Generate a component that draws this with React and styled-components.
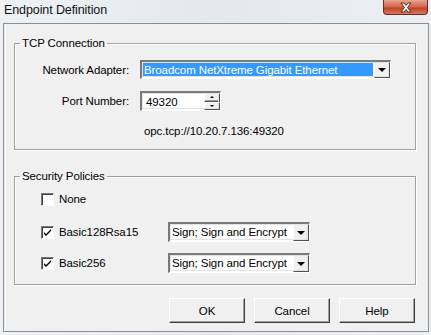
import React from 'react';
import styled, { createGlobalStyle } from 'styled-components';

const Global = createGlobalStyle`
    html, body {
        margin: 0;
        padding: 0;
        background: #e6eaef;
    }
    * {
        box-sizing: border-box;
    }
`;

const Window = styled.div`
    width: 431px;
    height: 335px;
    display: flex;
    flex-direction: column;
    background: linear-gradient(90deg, #eef1f4 0%, #e4e8ed 50%, #eceff2 100%);
    font: 11.5px 'Liberation Sans', Arial, sans-serif;
    letter-spacing: -0.1px;
    color: #000;
    overflow: hidden;
`;

const TitleBar = styled.div`
    height: 23px;
    flex: none;
    display: flex;
    justify-content: space-between;
    align-items: flex-start;
`;

const Title = styled.div`
    margin: 3px 0 0 4px;
    font: 12.5px 'Liberation Sans', Arial, sans-serif;
    color: #111;
`;

const CloseButton = styled.div`
    width: 45px;
    height: 15px;
    margin-right: 3px;
    border: 1px solid #6e2a1e;
    border-top: none;
    border-radius: 0 0 4px 4px;
    background: linear-gradient(180deg, #e8a493 0%, #d36a50 45%, #c2452a 60%, #d8765c 100%);
    display: flex;
    justify-content: center;
    align-items: center;
`;

const Panel = styled.div`
    flex: 1;
    margin: 0 2px 3px 3px;
    border: 1px solid #8b8f94;
    background: #f0f0f0;
    padding: 12px 12px 0 10px;
    display: flex;
    flex-direction: column;
`;

const Group = styled.fieldset`
    margin: 0;
    padding: 0;
    height: ${p => p.$h}px;
    margin-top: ${p => p.$top || 0}px;
    border: 1px solid #a0a0a0;
    border-radius: 0;
    box-shadow: inset 1px 1px 0 #fff, 1px 1px 0 #fff;
`;

const Legend = styled.legend`
    margin-left: 5px;
    padding: 0 2px;
    line-height: 14px;
`;

const FormRow = styled.div`
    display: grid;
    grid-template-columns: 114px auto;
    column-gap: 11px;
    align-items: center;
    margin-top: ${p => p.$top}px;
`;

const Label = styled.span`
    text-align: right;
`;

const Sunken = styled.div`
    display: flex;
    align-items: stretch;
    width: ${p => p.$w}px;
    height: ${p => p.$h}px;
    border-top: 2px solid #7a7a7a;
    border-left: 2px solid #7a7a7a;
    border-right: 1px solid #fff;
    border-bottom: 1px solid #fff;
    outline: 1px solid #e3e3e3;
    outline-offset: -3px;
    background: #fff;
`;

const ComboText = styled.div`
    flex: 1;
    margin: 1px;
    padding-left: 1px;
    line-height: 14px;
    white-space: nowrap;
    overflow: hidden;
    background: ${p => (p.$selected ? '#3399ff' : 'transparent')};
    color: ${p => (p.$selected ? '#fff' : '#000')};
`;

const Raised = styled.div`
    width: ${p => p.$w}px;
    flex: none;
    background: #f0f0f0;
    border-top: 1px solid #fff;
    border-left: 1px solid #fff;
    border-right: 1px solid #505050;
    border-bottom: 1px solid #505050;
    box-shadow: inset -1px -1px 0 #a0a0a0;
    display: flex;
    justify-content: center;
    align-items: center;
`;

const Arrow = styled.span`
    width: 0;
    height: 0;
    border-left: ${p => p.$s}px solid transparent;
    border-right: ${p => p.$s}px solid transparent;
    ${p => (p.$up ? 'border-bottom' : 'border-top')}: ${p => p.$s}px solid #000;
`;

const SpinStack = styled.div`
    display: flex;
    flex-direction: column;
    width: 16px;
    margin: 0 0 0 auto;
    & > div {
        flex: 1;
        width: 16px;
    }
`;

const SpinText = styled.div`
    flex: 1;
    padding: 2px 0 0 4px;
    line-height: 14px;
`;

const Url = styled.div`
    margin: 14px 0 0 129px;
`;

const CheckRow = styled.div`
    display: flex;
    align-items: center;
    height: 20px;
    margin-top: ${p => p.$top}px;
    padding-left: 26px;
`;

const Box = styled.span`
    width: 13px;
    height: 13px;
    flex: none;
    background: #fff;
    border-top: 1px solid #7a7a7a;
    border-left: 1px solid #7a7a7a;
    border-right: 1px solid #fff;
    border-bottom: 1px solid #fff;
    box-shadow: inset 1px 1px 0 #404040;
    display: flex;
    align-items: center;
    justify-content: center;
`;

const CheckLabel = styled.span`
    width: 109px;
    margin-left: 5px;
`;

const Buttons = styled.div`
    display: flex;
    justify-content: flex-end;
    gap: 9px;
    margin-top: 13px;
    padding-right: 1px;
`;

const Button = styled.div`
    width: 76px;
    height: 25px;
    background: #f0f0f0;
    border-top: 1px solid #fff;
    border-left: 1px solid #fff;
    border-right: 1px solid #404040;
    border-bottom: 1px solid #404040;
    box-shadow: inset -1px -1px 0 #a0a0a0;
    display: flex;
    justify-content: center;
    align-items: center;
`;

const Combo = ({ w, h, text, selected }) => (
    <Sunken $w={w} $h={h}>
        <ComboText $selected={selected}>{text}</ComboText>
        <Raised $w={16}><Arrow $s={4} /></Raised>
    </Sunken>
);

const Check = ({ checked }) => (
    <Box>
        {checked ? (
            <svg width="9" height="9" viewBox="0 0 9 9">
                <path d="M1 4 L3 6 L8 1 L8 3 L3 8 L1 6 Z" fill="#000" />
            </svg>
        ) : null}
    </Box>
);

const App = () => {
    return (
        <Window>
            <Global />
            <TitleBar>
                <Title>Endpoint Definition</Title>
                <CloseButton>
                    <svg width="14" height="11" viewBox="0 0 14 11">
                        <path d="M2 1 L5 1 L7 3.5 L9 1 L12 1 L8.5 5.5 L12 10 L9 10 L7 7.5 L5 10 L2 10 L5.5 5.5 Z"
                            fill="#fff" stroke="#5a2a22" strokeWidth="1" />
                    </svg>
                </CloseButton>
            </TitleBar>
            <Panel>
                <Group $h={114}>
                    <Legend>TCP Connection</Legend>
                    <FormRow $top={10}>
                        <Label>Network Adapter:</Label>
                        <Combo w={251} h={19} text="Broadcom NetXtreme Gigabit Ethernet" selected />
                    </FormRow>
                    <FormRow $top={12}>
                        <Label>Port Number:</Label>
                        <Sunken $w={81} $h={20}>
                            <SpinText>49320</SpinText>
                            <SpinStack>
                                <Raised $w={16}><Arrow $s={2} $up /></Raised>
                                <Raised $w={16}><Arrow $s={2} /></Raised>
                            </SpinStack>
                        </Sunken>
                    </FormRow>
                    <Url>opc.tcp://10.20.7.136:49320</Url>
                </Group>
                <Group $h={116} $top={19}>
                    <Legend>Security Policies</Legend>
                    <CheckRow $top={6}>
                        <Check />
                        <CheckLabel>None</CheckLabel>
                    </CheckRow>
                    <CheckRow $top={13}>
                        <Check checked />
                        <CheckLabel>Basic128Rsa15</CheckLabel>
                        <Combo w={142} h={20} text="Sign; Sign and Encrypt" />
                    </CheckRow>
                    <CheckRow $top={11}>
                        <Check checked />
                        <CheckLabel>Basic256</CheckLabel>
                        <Combo w={142} h={20} text="Sign; Sign and Encrypt" />
                    </CheckRow>
                </Group>
                <Buttons>
                    <Button>OK</Button>
                    <Button>Cancel</Button>
                    <Button>Help</Button>
                </Buttons>
            </Panel>
        </Window>
    );
};

export default App;
